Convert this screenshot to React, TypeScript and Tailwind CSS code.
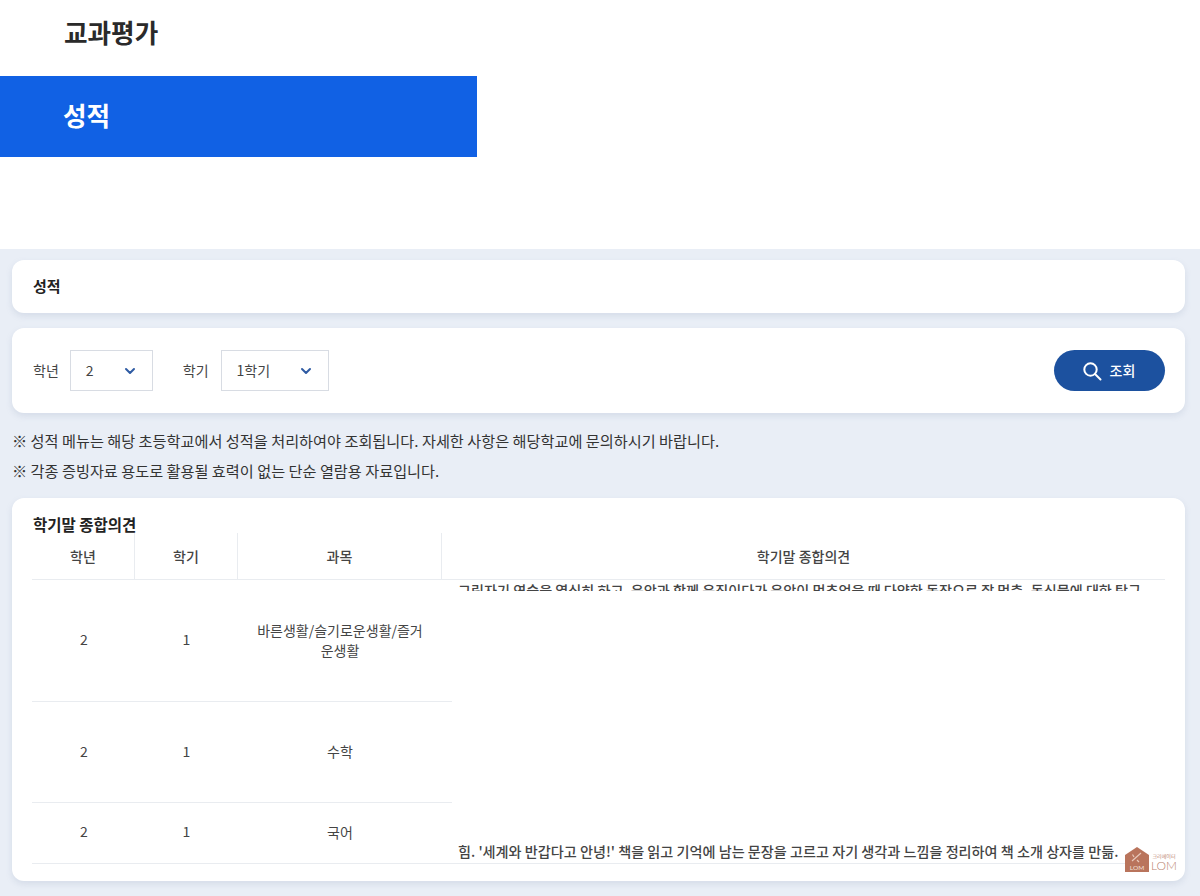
import { ChevronDown } from "lucide-react";

const rows = [
  { subject: "바른생활/슬기로운생활/즐거운생활", height: "h-[122px] pb-[2px]" },
  { subject: "수학", height: "h-[101px] pb-[2px]" },
  { subject: "국어", height: "h-[61px] pb-[4px]" },
];

function Select({ value, width }: { value: string; width: string }) {
  return (
    <div className={`flex h-[41px] items-center justify-between border border-[#d8dce3] bg-white pl-[15px] pr-[14px] text-[14px] text-[#444] ${width}`}>
      <span>{value}</span>
      <ChevronDown size={16} strokeWidth={3} className="text-[#2f5ba3]" />
    </div>
  );
}

export default function App() {
  return (
    <div className="relative h-[896px] w-[1200px] overflow-hidden bg-[#e9eef6] font-['Noto_Sans_CJK_KR','Noto_Sans',sans-serif] text-[#333]">
      <header className="h-[249px] bg-white">
        <div className="flex h-[76px] items-center pb-[12px] pl-[64px] text-[25.6px] font-bold text-[#2a2a2a]">교과평가</div>
        <div className="flex h-[81px] w-[477px] items-center bg-[#1161e4] pb-[3px] pl-[63px] text-[25.6px] font-bold text-white">성적</div>
      </header>

      <main className="pl-[12px] pr-[15px] pt-[11px]">
        <section className="flex h-[53px] items-center rounded-xl bg-white pl-[21px] text-[15px] font-bold text-[#222] shadow-[0_3px_6px_rgba(120,140,170,0.18)]">
          성적
        </section>

        <section className="mt-[15px] flex h-[85px] items-center rounded-xl bg-white pl-[21px] pr-[20px] text-[14px] shadow-[0_3px_6px_rgba(120,140,170,0.18)]">
          <span className="mr-[11px] text-[#444]">학년</span>
          <Select value="2" width="w-[83px]" />
          <span className="ml-[30px] mr-[12px] text-[#444]">학기</span>
          <Select value="1학기" width="w-[108px]" />
          <button className="ml-auto flex h-[41px] w-[111px] items-center justify-center gap-[8px] rounded-full bg-[#1c519f] pr-[2px] text-[14px] font-medium text-white">
            <svg width="20" height="20" viewBox="0 0 20 20" fill="none" stroke="currentColor" strokeWidth="2" strokeLinecap="round">
              <circle cx="8.5" cy="8.5" r="6.2" />
              <path d="M13 13 L18.5 18.5" />
            </svg>
            조회
          </button>
        </section>

        <div className="mt-[12px] text-[15.2px] leading-[30px] text-[#333]">
          <p>※ 성적 메뉴는 해당 초등학교에서 성적을 처리하여야 조회됩니다. 자세한 사항은 해당학교에 문의하시기 바랍니다.</p>
          <p>※ 각종 증빙자료 용도로 활용될 효력이 없는 단순 열람용 자료입니다.</p>
        </div>

        <section className="mt-[13px] h-[383px] rounded-xl bg-white pl-[20px] pr-[20px] pt-[16px] shadow-[0_3px_6px_rgba(120,140,170,0.18)]">
          <h2 className="h-[19px] pl-[1px] text-[15.5px] font-bold leading-[21px] text-[#222]">학기말 종합의견</h2>

          <div className="flex h-[47px] border-b border-[#e9ecf0] text-[14px] font-medium text-[#444]">
            <div className="flex w-[103px] items-center justify-center border-r border-[#e9ecf0]">학년</div>
            <div className="flex w-[103px] items-center justify-center border-r border-[#e9ecf0]">학기</div>
            <div className="flex w-[204px] items-center justify-center border-r border-[#e9ecf0]">과목</div>
            <div className="flex flex-1 items-center justify-center">학기말 종합의견</div>
          </div>

          <div className="flex h-[284px] border-b border-[#e9ecf0]">
            <div className="w-[420px]">
              {rows.map((row, i) => (
                <div
                  key={row.subject}
                  className={`flex items-center text-[14px] text-[#444] ${row.height} ${i < rows.length - 1 ? "border-b border-[#e9ecf0]" : ""}`}
                >
                  <div className="w-[103px] pl-[1px] text-center">2</div>
                  <div className="w-[103px] text-center">1</div>
                  <div className="w-[204px] px-[18px] text-center leading-[20px]">{row.subject}</div>
                </div>
              ))}
            </div>
            <div className="ml-[6px] flex flex-1 flex-col justify-between overflow-hidden pb-[2px] text-[14.13px] font-medium text-[#444]">
              <p className="h-[11px] overflow-hidden whitespace-nowrap leading-[20px]">
                그림자기 연습을 열심히 하고, 음악과 함께 움직이다가 음악이 멈추었을 때 다양한 동작으로 잘 멈춤. 동식물에 대한 탐구
              </p>
              <p className="whitespace-nowrap leading-[20px]">
                힘. '세계와 반갑다고 안녕!' 책을 읽고 기억에 남는 문장을 고르고 자기 생각과 느낌을 정리하여 책 소개 상자를 만듦.
              </p>
            </div>
          </div>
        </section>
      </main>

      <div className="absolute left-[1125px] top-[847px] flex items-end gap-[3px] bg-white">
        <svg width="24" height="25" viewBox="0 0 24 25">
          <path d="M0 8 L12 0 L24 8 V25 H0 Z" fill="#b9745c" />
          <path d="M7 14 L16 6 M9 10 L7.5 7.5 M12 13 L14 15" stroke="#e8c9bb" strokeWidth="1.2" fill="none" />
          <text x="12" y="22.5" textAnchor="middle" fontSize="6.5" fill="#f3e2da" fontFamily="Lato, sans-serif">LOM</text>
        </svg>
        <div className="flex w-[24px] flex-col items-center leading-none text-[#b9836f]">
          <span className="whitespace-nowrap text-[5px]">크리에이터</span>
          <span className="mt-[2px] font-['Lato',sans-serif] text-[12px] font-light">LOM</span>
        </div>
      </div>
    </div>
  );
}
